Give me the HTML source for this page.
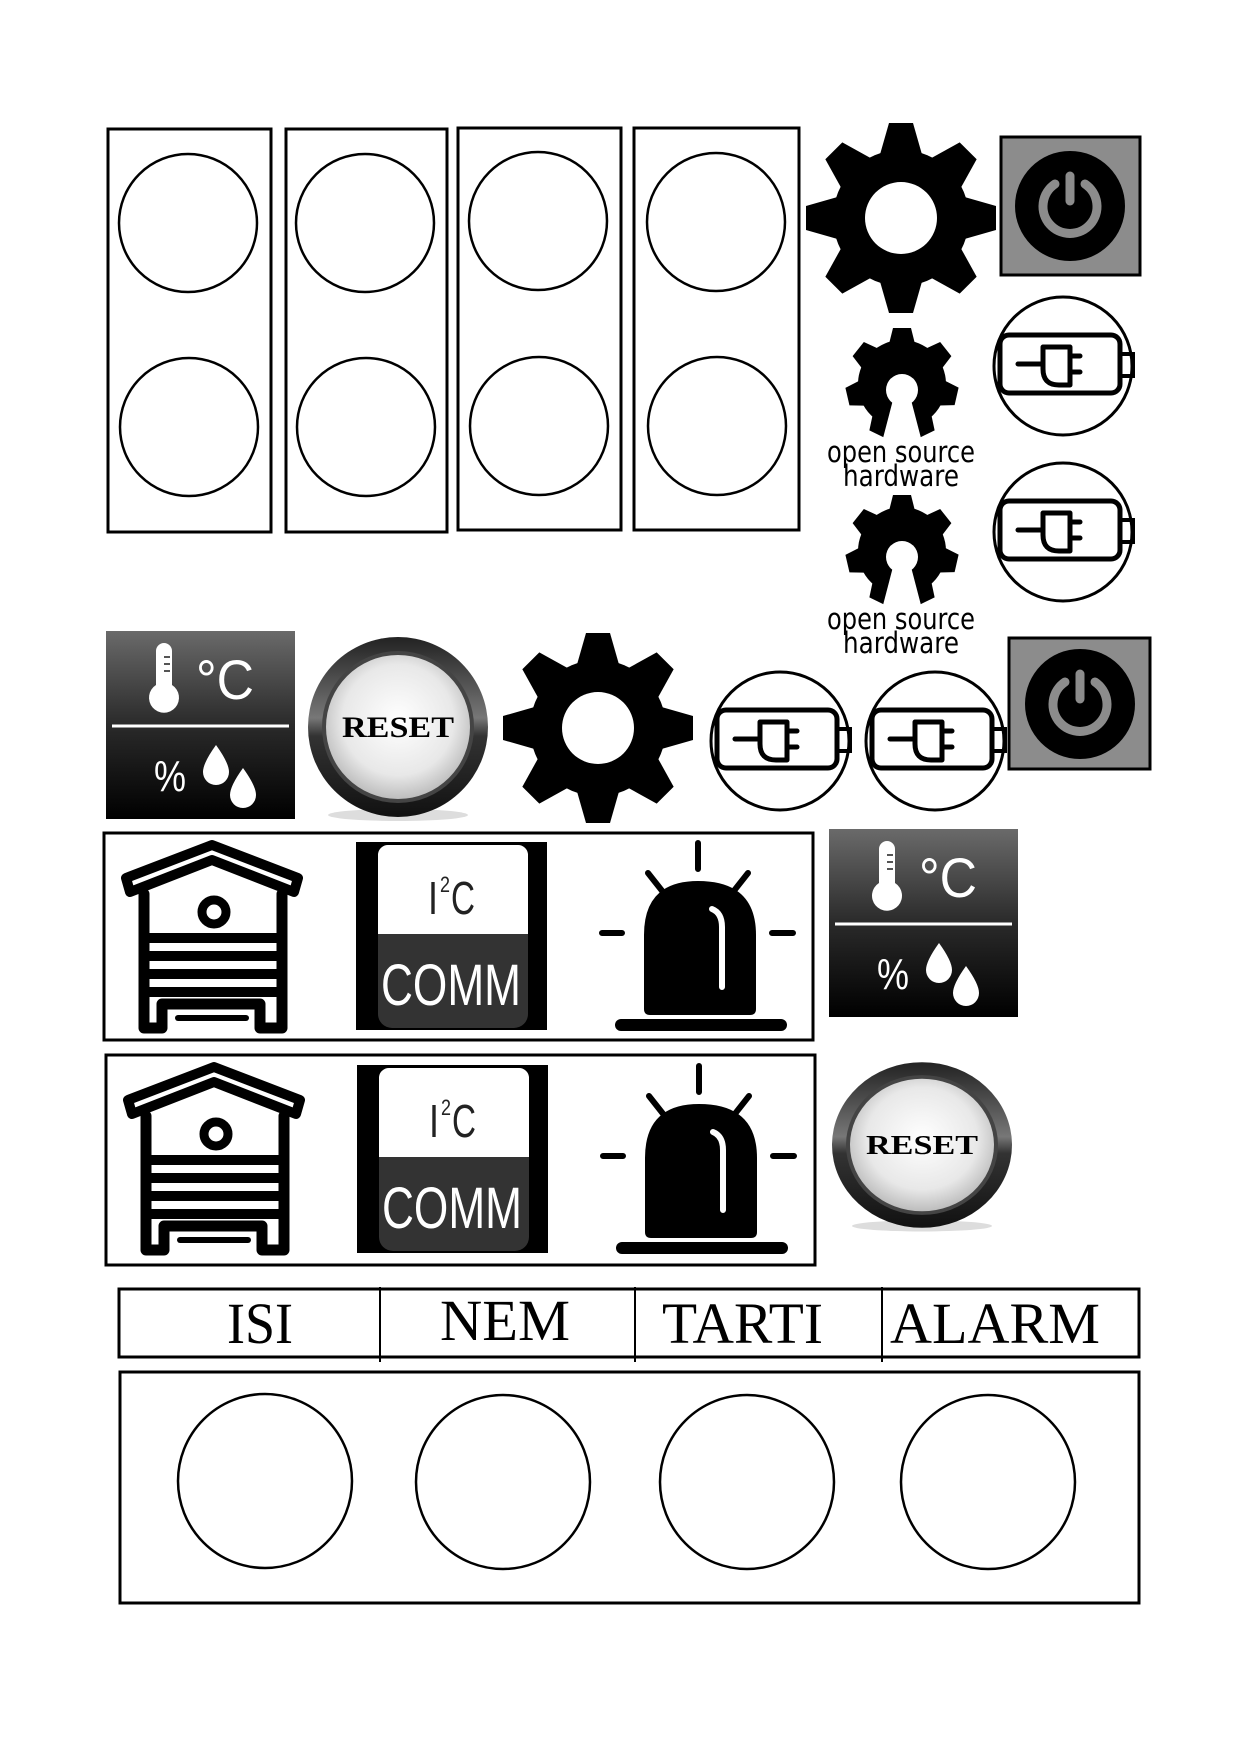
<!DOCTYPE html>
<html><head><meta charset="utf-8"><style>
html,body{margin:0;padding:0;background:#fff;}
svg{display:block;}
</style></head><body>
<svg width="1240" height="1748" viewBox="0 0 1240 1748" xmlns="http://www.w3.org/2000/svg">
<defs>
  <polygon id="tooth" points="-22,-60 22,-60 12,-95 -12,-95"/>
  <g id="gear">
    <circle r="68" fill="#000"/>
    <use href="#tooth"/><use href="#tooth" transform="rotate(45)"/><use href="#tooth" transform="rotate(90)"/><use href="#tooth" transform="rotate(135)"/>
    <use href="#tooth" transform="rotate(180)"/><use href="#tooth" transform="rotate(225)"/><use href="#tooth" transform="rotate(270)"/><use href="#tooth" transform="rotate(315)"/>
    <circle r="36" fill="#fff"/>
  </g>
  <polygon id="otooth" points="-14,-36 14,-36 9,-56 -9,-56"/>
  <g id="oshw">
    <circle r="44" fill="#000"/>
    <use href="#otooth"/><use href="#otooth" transform="rotate(51.4)"/><use href="#otooth" transform="rotate(102.8)"/><use href="#otooth" transform="rotate(154)"/>
    <use href="#otooth" transform="rotate(206)"/><use href="#otooth" transform="rotate(257)"/><use href="#otooth" transform="rotate(308.6)"/>
    <circle cx="0" cy="6" r="16" fill="#fff"/>
    <polygon points="-8,12 8,12 20,58 -20,58" fill="#fff"/>
  </g>
  <g id="batt">
    <circle r="69" fill="#fff" stroke="#000" stroke-width="3"/>
    <rect x="-63" y="-31" width="120" height="58" rx="9" fill="none" stroke="#000" stroke-width="5"/>
    <rect x="57" y="-12" width="13" height="22" fill="none" stroke="#000" stroke-width="4"/>
    <path d="M-45,-2 H-20 M-20,-19 V3 Q-20,19 -4,19 H7 V-19 Z M7,-10 H17 M7,6 H17" fill="none" stroke="#000" stroke-width="5" stroke-linecap="round" stroke-linejoin="round"/>
  </g>
  <g id="power">
    <circle r="55" fill="#000"/>
    <path d="M-15,-22 A27,27 0 1 0 15,-22" fill="none" stroke="#8c8c8c" stroke-width="9" stroke-linecap="round"/>
    <line x1="0" y1="-30" x2="0" y2="-5" stroke="#8c8c8c" stroke-width="9" stroke-linecap="round"/>
  </g>
  <linearGradient id="tg" x1="0" y1="0" x2="0" y2="1">
    <stop offset="0" stop-color="#6a6a6a"/><stop offset="0.5" stop-color="#2a2a2a"/><stop offset="1" stop-color="#000"/>
  </linearGradient>
  <g id="temp">
    <rect width="189" height="188" fill="url(#tg)"/>
    <line x1="6" y1="95" x2="183" y2="95" stroke="#fff" stroke-width="3"/>
    <path d="M50,20 a8,8 0 0 1 16,0 v34 a15,15 0 1 1 -16,0 z" fill="#fff"/>
    <path d="M58,26 h6 M58,33 h6 M58,40 h6" stroke="#555" stroke-width="2"/>
    <text x="90" y="68" font-family="Liberation Sans, sans-serif" font-size="56" fill="#fff" textLength="58" lengthAdjust="spacingAndGlyphs">°C</text>
    <text x="48" y="160" font-family="Liberation Sans, sans-serif" font-size="44" fill="#fff" textLength="32" lengthAdjust="spacingAndGlyphs">%</text>
    <path d="M110,114 q13,18 13,27 a13,13 0 0 1 -26,0 q0,-9 13,-27z M137,137 q13,18 13,27 a13,13 0 0 1 -26,0 q0,-9 13,-27z" fill="#fff"/>
  </g>
  <radialGradient id="rg" cx="0.5" cy="0.45" r="0.55">
    <stop offset="0" stop-color="#fff"/><stop offset="0.7" stop-color="#e8e8e8"/><stop offset="1" stop-color="#bdbdbd"/>
  </radialGradient>
  <linearGradient id="ring" x1="0" y1="0" x2="0" y2="1">
    <stop offset="0" stop-color="#222"/><stop offset="0.45" stop-color="#777"/><stop offset="0.55" stop-color="#333"/><stop offset="1" stop-color="#111"/>
  </linearGradient>
  <g id="reset">
    <ellipse cx="0" cy="88" rx="70" ry="6" fill="#ddd"/>
    <circle r="90" fill="url(#ring)"/>
    <circle r="76" fill="#444"/>
    <circle r="72" fill="url(#rg)"/>
    <text x="0" y="10" text-anchor="middle" font-family="Liberation Serif, serif" font-weight="bold" font-size="30" fill="#000" textLength="112" lengthAdjust="spacingAndGlyphs">RESET</text>
  </g>
  <g id="hive" fill="none" stroke="#000" stroke-width="11" stroke-linejoin="round" stroke-linecap="round">
    <path d="M6,32 L92,-1 L178,32 L174,46 L92,14 L10,46 Z" stroke-width="10"/>
    <path d="M24,48 V182 H42 V158 H140 V182 H162 V48"/>
    <circle cx="94" cy="66" r="12" stroke-width="9"/>
    <path d="M24,92 H162 M24,110 H162 M24,128 H162 M24,146 H162" stroke-width="10"/>
    <path d="M58,172 H126" stroke-width="6"/>
  </g>
  <g id="i2c">
    <rect width="191" height="188" fill="#000"/>
    <path d="M22,12 a10,10 0 0 1 10,-9 h130 a10,10 0 0 1 10,9 v80 h-150z" fill="#fff"/>
    <path d="M22,92 h150 v80 a14,14 0 0 1 -14,14 h-122 a14,14 0 0 1 -14,-14z" fill="#333"/>
    <text x="72" y="72" font-family="Liberation Sans, sans-serif" font-size="46" fill="#222" textLength="10" lengthAdjust="spacingAndGlyphs">I</text>
    <text x="84" y="50" font-family="Liberation Sans, sans-serif" font-size="22" fill="#222" textLength="10" lengthAdjust="spacingAndGlyphs">2</text>
    <text x="95" y="72" font-family="Liberation Sans, sans-serif" font-size="46" fill="#222" textLength="24" lengthAdjust="spacingAndGlyphs">C</text>
    <text x="95" y="163" text-anchor="middle" font-family="Liberation Sans, sans-serif" font-size="58" fill="#fff" textLength="140" lengthAdjust="spacingAndGlyphs">COMM</text>
  </g>
  <g id="siren">
    <path d="M96,0 V26 M46,30 L61,49 M146,30 L131,49 M0,90 H20 M170,90 H191" stroke="#000" stroke-width="6" stroke-linecap="round"/>
    <path d="M42,166 V92 Q42,38 96,38 Q154,38 154,92 V166 Q154,172 148,172 H48 Q42,172 42,166Z" fill="#000"/>
    <path d="M110,66 Q120,70 120,84 V144" stroke="#fff" stroke-width="6" fill="none" stroke-linecap="round"/>
    <rect x="13" y="176" width="172" height="12" rx="6" fill="#000"/>
  </g>
</defs>

<g fill="none" stroke="#000">
  <rect x="108" y="129" width="163" height="403" stroke-width="3"/>
  <rect x="286" y="129" width="161" height="403" stroke-width="3"/>
  <rect x="458" y="128" width="163" height="402" stroke-width="3"/>
  <rect x="634" y="128" width="165" height="402" stroke-width="3"/>
  <g stroke-width="2.5">
    <circle cx="188" cy="223" r="69"/><circle cx="189" cy="427" r="69"/>
    <circle cx="365" cy="223" r="69"/><circle cx="366" cy="427" r="69"/>
    <circle cx="538" cy="221" r="69"/><circle cx="539" cy="426" r="69"/>
    <circle cx="716" cy="222" r="69"/><circle cx="717" cy="426" r="69"/>
  </g>
</g>

<use href="#gear" transform="translate(901,218)"/>
<rect x="1001" y="137" width="139" height="138" fill="#8c8c8c" stroke="#000" stroke-width="3"/>
<use href="#power" transform="translate(1070,206)"/>

<use href="#oshw" transform="translate(902,384)"/>
<text x="827" y="462" font-family="DejaVu Sans, sans-serif" font-size="29" fill="#000" textLength="148" lengthAdjust="spacingAndGlyphs">open source</text>
<text x="843" y="486" font-family="DejaVu Sans, sans-serif" font-size="29" fill="#000" textLength="116" lengthAdjust="spacingAndGlyphs">hardware</text>
<use href="#oshw" transform="translate(902,551)"/>
<text x="827" y="629" font-family="DejaVu Sans, sans-serif" font-size="29" fill="#000" textLength="148" lengthAdjust="spacingAndGlyphs">open source</text>
<text x="843" y="653" font-family="DejaVu Sans, sans-serif" font-size="29" fill="#000" textLength="116" lengthAdjust="spacingAndGlyphs">hardware</text>

<use href="#batt" transform="translate(1063,366)"/>
<use href="#batt" transform="translate(1063,532)"/>

<use href="#temp" transform="translate(106,631)"/>
<use href="#reset" transform="translate(398,727)"/>
<use href="#gear" transform="translate(598,728)"/>
<use href="#batt" transform="translate(780,741)"/>
<use href="#batt" transform="translate(935,741)"/>
<rect x="1009" y="638" width="141" height="131" fill="#8c8c8c" stroke="#000" stroke-width="3"/>
<use href="#power" transform="translate(1080,704)"/>

<rect x="104" y="833" width="709" height="207" fill="none" stroke="#000" stroke-width="3"/>
<use href="#hive" transform="translate(120,846)"/>
<use href="#i2c" transform="translate(356,842)"/>
<use href="#siren" transform="translate(602,843)"/>
<use href="#temp" transform="translate(829,829)"/>

<rect x="106" y="1055" width="709" height="210" fill="none" stroke="#000" stroke-width="3"/>
<use href="#hive" transform="translate(122,1068)"/>
<use href="#i2c" transform="translate(357,1065)"/>
<use href="#siren" transform="translate(603,1066)"/>
<use href="#reset" transform="translate(922,1145) scale(1,0.92)"/>

<rect x="119" y="1289" width="1020" height="68" fill="none" stroke="#000" stroke-width="3"/>
<path d="M380,1287 V1362 M635,1287 V1362 M882,1287 V1362" stroke="#000" stroke-width="2"/>
<g font-family="Liberation Serif, serif" font-size="58" fill="#000">
  <text x="227" y="1343" textLength="66" lengthAdjust="spacingAndGlyphs">ISI</text>
  <text x="440" y="1340" textLength="130" lengthAdjust="spacingAndGlyphs">NEM</text>
  <text x="662" y="1343" textLength="161" lengthAdjust="spacingAndGlyphs">TARTI</text>
  <text x="890" y="1343" textLength="210" lengthAdjust="spacingAndGlyphs">ALARM</text>
</g>

<rect x="120" y="1372" width="1019" height="231" fill="none" stroke="#000" stroke-width="3"/>
<g fill="none" stroke="#000" stroke-width="2.5">
  <ellipse cx="265" cy="1481" rx="87" ry="87"/>
  <ellipse cx="503" cy="1482" rx="87" ry="87"/>
  <ellipse cx="747" cy="1482" rx="87" ry="87"/>
  <ellipse cx="988" cy="1482" rx="87" ry="87"/>
</g>
</svg>
</body></html>
